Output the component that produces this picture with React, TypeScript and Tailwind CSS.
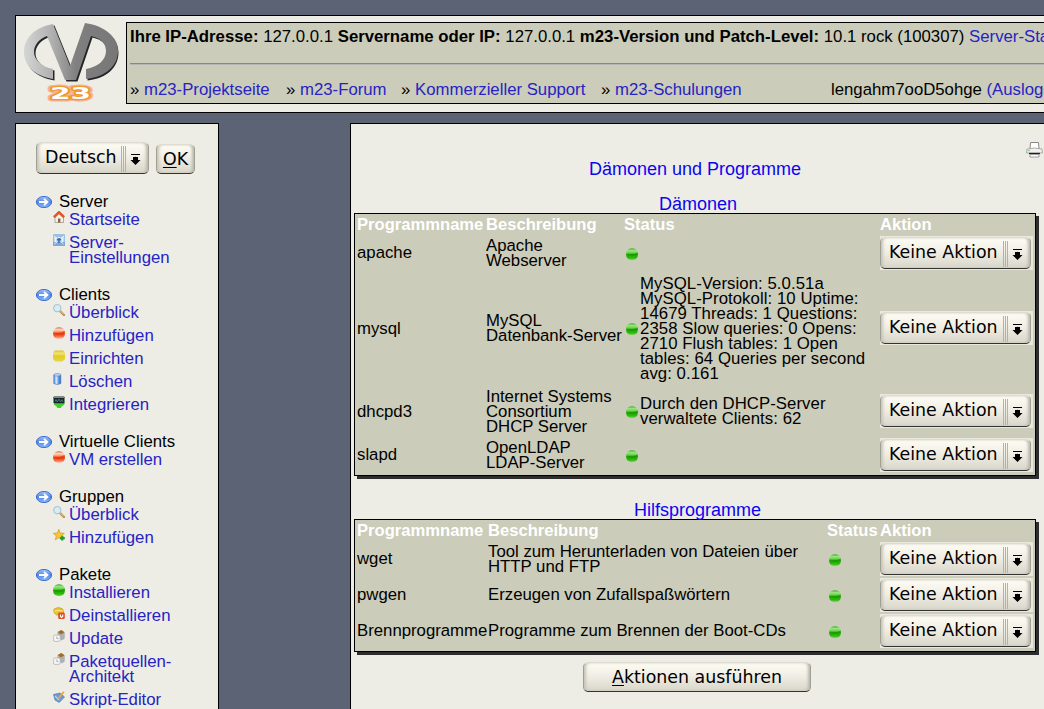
import React from "react";

type Item = { icon: string; lines: string[] };
type Group = { title: string; items: Item[] };

const groups: Group[] = [
  { title: "Server", items: [{ icon: "home", lines: ["Startseite"] }, { icon: "settings", lines: ["Server-", "Einstellungen"] }] },
  {
    title: "Clients",
    items: [
      { icon: "lens", lines: ["Überblick"] },
      { icon: "red", lines: ["Hinzufügen"] },
      { icon: "yellow", lines: ["Einrichten"] },
      { icon: "can", lines: ["Löschen"] },
      { icon: "integrate", lines: ["Integrieren"] },
    ],
  },
  { title: "Virtuelle Clients", items: [{ icon: "red", lines: ["VM erstellen"] }] },
  { title: "Gruppen", items: [{ icon: "lens", lines: ["Überblick"] }, { icon: "star", lines: ["Hinzufügen"] }] },
  {
    title: "Pakete",
    items: [
      { icon: "green", lines: ["Installieren"] },
      { icon: "remove", lines: ["Deinstallieren"] },
      { icon: "update", lines: ["Update"] },
      { icon: "update", lines: ["Paketquellen-", "Architekt"] },
      { icon: "script", lines: ["Skript-Editor"] },
    ],
  },
];

function Gradients() {
  return (
    <svg width="0" height="0" className="absolute">
      <defs>
        <linearGradient id="gGreen" x1="0" y1="0" x2="0" y2="1">
          <stop offset="0" stopColor="#3fae2a" /><stop offset=".2" stopColor="#9be680" /><stop offset=".42" stopColor="#5fd040" />
          <stop offset=".5" stopColor="#22a008" /><stop offset=".8" stopColor="#2cb80c" /><stop offset="1" stopColor="#69d84a" />
        </linearGradient>
        <linearGradient id="gRed" x1="0" y1="0" x2="0" y2="1">
          <stop offset="0" stopColor="#d8703f" /><stop offset=".2" stopColor="#fbd8c8" /><stop offset=".42" stopColor="#f08a60" />
          <stop offset=".5" stopColor="#e83c0c" /><stop offset=".75" stopColor="#f4623a" /><stop offset="1" stopColor="#f8d0c0" />
        </linearGradient>
        <linearGradient id="gYellow" x1="0" y1="0" x2="0" y2="1">
          <stop offset="0" stopColor="#d8c020" /><stop offset=".25" stopColor="#f0e47c" /><stop offset=".5" stopColor="#e2cc28" /><stop offset="1" stopColor="#e6d644" />
        </linearGradient>
        <linearGradient id="gBlue" x1="0" y1="0" x2="0" y2="1">
          <stop offset="0" stopColor="#a9c8fb" /><stop offset=".5" stopColor="#4c86ec" /><stop offset="1" stopColor="#8cc0ff" />
        </linearGradient>
        <linearGradient id="gCan" x1="0" y1="0" x2="1" y2="0">
          <stop offset="0" stopColor="#3f80d8" /><stop offset=".35" stopColor="#dcecff" /><stop offset=".7" stopColor="#5b98ea" /><stop offset="1" stopColor="#2c62b8" />
        </linearGradient>
        <linearGradient id="gMetal" x1="0" y1="0" x2="1" y2="0">
          <stop offset="0" stopColor="#d4d5d5" /><stop offset=".3" stopColor="#b0b0b0" /><stop offset=".55" stopColor="#808080" /><stop offset="1" stopColor="#777777" />
        </linearGradient>
      </defs>
    </svg>
  );
}

const ball = "M2 1.4Q6 -.8 10 1.4Q12 3 12 6Q12 9.500 10 11Q6 13 2 11Q0 9.500 0 6Q0 3 2 1.4Z";

function Icon({ name }: { name: string }) {
  return (
    <svg width="12" height="12" viewBox="0 0 12 12" className="block shrink-0">
      {name === "green" && (
        <>
          <path d={ball} fill="url(#gGreen)" /><path d="M.3 6.500Q6 7.500 11.700 4.500V6.500Q9 8 6 8Q3 8 .3 6.500Z" fill="#1c9606" opacity=".7" />
        </>
      )}
      {name === "red" && (
        <>
          <path d={ball} fill="url(#gRed)" /><path d="M.3 6.500Q6 7 11.700 4V6.500Q9 8 6 8Q3 8 .3 6.500Z" fill="#ea3a0a" opacity=".8" />
        </>
      )}
      {name === "yellow" && <path d="M2 .5H10L12 2.5V9L9.5 11.5H2.5L0 9V2.5Z" fill="url(#gYellow)" />}
      {name === "home" && (
        <>
          <path d="M2 6V11.5H10.5V6L6 2Z" fill="#f5f1ea" stroke="#9a8a78" strokeWidth=".7" />
          <path d="M.8 6.2L6 1.300L11.2 6.2" fill="none" stroke="#e2542a" strokeWidth="2.600" />
          <path d="M5 7.5H7.4V11.5H5Z" fill="#8a6248" />
        </>
      )}
      {name === "settings" && (
        <>
          <rect width="12" height="12" rx="1" fill="#9cbfe4" /><path d="M0 8H12V12H0Z" fill="#7fa8d4" />
          <path d="M2.500 3V8M9.500 3V8" stroke="#e9f3fc" strokeWidth="2" /><path d="M1 2L4 4.500L6 3L8 4.500L11 2M1.500 10L4.500 7.500M10.500 10L7.500 7.500" stroke="#e9f3fc" strokeWidth="1" fill="none" />
          <path d="M4 5.500H8M6 4V9" stroke="#3b6da9" strokeWidth="1.500" />
        </>
      )}
      {name === "lens" && (
        <>
          <path d="M7 7L11 11" stroke="#b58c4b" strokeWidth="2.4" strokeLinecap="round" /><path d="M7.6 7.2L11 10.6" stroke="#ead39b" strokeWidth="1" />
          <circle cx="4.3" cy="4.2" r="3.7" fill="#d5edf5" stroke="#a4bdc8" strokeWidth="1" />
        </>
      )}
      {name === "can" && (
        <>
          <path d="M.8 1.8V10.5Q4 12.7 7.8 10.5V1.8Z" fill="url(#gCan)" stroke="#4672ae" strokeWidth=".6" />
          <ellipse cx="4.3" cy="1.8" rx="3.5" ry="1.3" fill="#b9d6f8" stroke="#4672ae" strokeWidth=".5" />
        </>
      )}
      {name === "integrate" && (
        <>
          <path d="M1 6H11.500V8.500L8.500 10.500L8 12H4.500L3.500 10.500L.8 8.500Z" fill="#3fd02c" /><rect x=".5" y=".5" width="11" height="6.8" rx=".7" fill="#14242a" />
          <path d="M1 1.5H11" stroke="#569dab" strokeWidth="1" /><path d="M2 5.5L3 3.5L4.3 6L6 3L7.5 6L9 3.5L10 6" fill="none" stroke="#5f9296" strokeWidth=".7" />
        </>
      )}
      {name === "star" && (
        <>
          <path d="M5.8 .3L7.2 4L11.3 4.3L8.3 6.9L9.3 11L5.8 8.8L2.2 11L3.3 6.9L.2 4.3L4.3 4Z" fill="#f6c72e" stroke="#c99417" strokeWidth=".6" />
          <path d="M9.3 6.8V11.6M7 9.2H11.8" stroke="#299a30" strokeWidth="2.2" />
        </>
      )}
      {name === "remove" && (
        <>
          <path d="M1 2Q5 -1 9.5 1.8Q11.500 4.8 10 8H3.500Q-.5 6 1 2Z" fill="#eac42e" stroke="#bb9320" strokeWidth=".6" /><path d="M1.5 4Q5 3 9.7 4" fill="none" stroke="#fbe88e" />
          <rect x="5.2" y="5.500" width="6.6" height="6.500" rx="1.200" fill="#e04c28" /><path d="M7.500 7.500V9.500L8.500 10.500L9.700 9.500V7.500" fill="none" stroke="#fff" strokeWidth="1.1" />
        </>
      )}
      {name === "update" && (
        <>
          <path d="M4.5 2L8 .3L11.5 2V7.5L8 9.5L4.5 8Z" fill="#b9ac9a" /><path d="M4.800 2L8.3 0L11.500 2.3L8 4.500Z" fill="#a46a28" />
          <path d="M8 4.500L11.500 3V9L8 10.5Z" fill="#a3b2c4" /><rect x=".4" y="5" width="6.8" height="6.4" rx="1.5" fill="#f4f4f2" stroke="#aaaab0" strokeWidth=".7" />
          <path d="M3.8 6.5V8.5H5.4" fill="none" stroke="#999" strokeWidth=".7" />
        </>
      )}
      {name === "script" && (
        <>
          <path d="M.5 3.5L7 2L11.5 6L6.2 11.5L2 9Z" fill="#6f9ad5" stroke="#426ba8" strokeWidth=".6" /><path d="M2 5L6 9" stroke="#b4d0f2" strokeWidth="1.3" />
          <path d="M5.4 7.5L10.8 .8" stroke="#e8a738" strokeWidth="1.8" />
        </>
      )}
    </svg>
  );
}

function Bullet() {
  return (
    <svg width="16" height="12" viewBox="0 0 16 12" className="mt-[2px] mr-[7px] block shrink-0">
      <ellipse cx="8" cy="6" rx="7.6" ry="5.6" fill="url(#gBlue)" stroke="#3462c4" strokeWidth=".9" />
      <path d="M3 6H11M8 3L11.5 6L8 9" fill="none" stroke="#fff" strokeWidth="1.8" />
    </svg>
  );
}

const buttonFace =
  "rounded-[5px] border border-[#a09f94] border-t-[#dedcd1] border-b-[1.5px] border-b-[#333333] bg-linear-to-b from-[#fdfcf4] via-[#efede3] to-[#d8d6c9] font-['DejaVu_Sans'] shadow-[inset_3px_0_3px_-1px_#c6c4b8,inset_-3px_0_3px_-1px_#bab8ac]";

function Select({ label }: { label: string }) {
  return (
    <div className={`flex h-8 w-full items-start ${buttonFace}`}>
      <span className="flex-1 pl-2 text-[17.4px] leading-[29px] whitespace-nowrap">{label}</span>
      <span className="mt-[3px] h-[26px] w-[5px] shrink-0 border-x border-[#b4b2a6]"><span className="mx-auto block h-full w-px bg-[#b4b2a6]" /></span>
      <svg width="22" height="30" viewBox="0 0 22 30" className="block shrink-0">
        <path d="M5 11.5H14M9.5 13.8V19" stroke="#000" strokeWidth="1" /><path d="M7 14H12V17H14.5L9.5 22L4.5 17H7Z" />
      </svg>
    </div>
  );
}

function ActionBox() {
  return (
    <div className="h-[34px] w-[153px] bg-[#eae7dc] pt-px pr-[2px]">
      <Select label="Keine Aktion" />
    </div>
  );
}

function Logo() {
  return (
    <svg width="106" height="88" viewBox="20 22 106 88" className="block shrink-0">
      <path
        fill="#262626"
        transform="translate(1.5 1.5)"
        d="M53 24L70 66L84 23C106 26 117 38 117 51C117 66 105 77 86 79V69C98 67 106 60 106 51C106 43 100 38 91 36L76 80H65L47 36C39 39 34 45 34 52C34 60 42 67 53 69V79C34 76 24 65 24 52C24 38 35 27 53 24Z"
      />
      <path
        fill="url(#gMetal)"
        d="M53 24L70 66L85 23C106 26 118 38 118 51C118 66 105 77 86 79V69C98 67 106 60 106 51C106 43 100 38 91 36L76 80H65L47 36C39 39 34 45 34 52C34 60 42 67 53 69V79C34 76 24 65 24 52C24 38 35 27 53 24Z"
      />
      <text x="50" y="99" textLength="41" lengthAdjust="spacingAndGlyphs" fontFamily="DejaVu Sans" fontWeight="bold" fontSize="16" fill="#f6b498" stroke="#f6b498" strokeWidth="5" strokeLinejoin="round">23</text>
      <text x="50" y="99" textLength="41" lengthAdjust="spacingAndGlyphs" fontFamily="DejaVu Sans" fontWeight="bold" fontSize="16" fill="#fff" stroke="#f0982c" strokeWidth="2.6" strokeLinejoin="round" paintOrder="stroke">23</text>
    </svg>
  );
}

type Row = { name: string; desc: string[]; status?: string[]; height: string; nameClass?: string; descClass?: string; statusClass?: string };

const daemons: Row[] = [
  { name: "apache", desc: ["Apache", "Webserver"], height: "h-[35px]" },
  {
    name: "mysql",
    desc: ["MySQL", "Datenbank-Server"],
    status: ["MySQL-Version: 5.0.51a", "MySQL-Protokoll: 10 Uptime:", "14679 Threads: 1 Questions:", "2358 Slow queries: 0 Opens:", "2710 Flush tables: 1 Open", "tables: 64 Queries per second", "avg: 0.161"],
    height: "h-[115px]",
    nameClass: "pt-[2px]",
    statusClass: "pt-[2px]",
  },
  { name: "dhcpd3", desc: ["Internet Systems", "Consortium", "DHCP Server"], status: ["Durch den DHCP-Server", "verwaltete Clients: 62"], height: "h-[51px]", nameClass: "pt-[2px]", descClass: "pt-[2px]" },
  { name: "slapd", desc: ["OpenLDAP", "LDAP-Server"], height: "h-[37px]" },
];

const tools: Row[] = [
  { name: "wget", desc: ["Tool zum Herunterladen von Dateien über", "HTTP und FTP"], height: "h-9", nameClass: "pb-[2px]" },
  { name: "pwgen", desc: ["Erzeugen von Zufallspaßwörtern"], height: "h-9", nameClass: "pb-[2px]", descClass: "pb-[2px]" },
  { name: "Brennprogramme", desc: ["Programme zum Brennen der Boot-CDs"], height: "h-9", nameClass: "pb-[2px]", descClass: "pb-[2px]" },
];

function Lines({ lines, className = "" }: { lines: string[]; className?: string }) {
  return <div className={className}>{lines.map((l) => <div key={l}>{l}</div>)}</div>;
}

function ProgramTable({ rows, columns, className }: { rows: Row[]; columns: string; className: string }) {
  return (
    <div className={`w-[682px] border border-black bg-[#cbccb9] pl-[2px] leading-[15px] whitespace-nowrap shadow-[3px_3px_0_#2d2d2d] ${className}`}>
      <div className={`grid h-[21px] items-center text-[16.6px] font-bold text-white ${columns}`}>
        <span>Programmname</span><span>Beschreibung</span><span>Status</span><span>Aktion</span>
      </div>
      {rows.map((r) => (
        <div key={r.name} className={`grid items-center ${columns} ${r.height}`}>
          <span className={r.nameClass}>{r.name}</span>
          <Lines lines={r.desc} className={r.descClass} />
          <div className="flex items-center gap-[2px] pl-[2px]">
            <div className="pt-[2px]"><Icon name="green" /></div>
            {r.status && <Lines lines={r.status} className={`tracking-[0.06px] ${r.statusClass ?? ""}`} />}
          </div>
          <ActionBox />
        </div>
      ))}
    </div>
  );
}

const link = "text-[#2723c4]";

export default function App() {
  return (
    <div className="h-[709px] w-[1044px] overflow-hidden bg-[#5b6375] pt-[15px] pl-[15px] font-['Liberation_Sans',sans-serif] text-[16.75px] leading-[15px] text-black">
      <Gradients />
      <header className="flex h-[98px] w-[1060px] border border-black bg-[#eeede5] pt-[6px] pl-1">
        <Logo />
        <div className="h-[82px] w-[1020px] shrink-0 border border-black bg-[#cbccb9] pl-[3px] whitespace-nowrap">
          <div className="flex h-10 gap-[4.7px] pt-[6px]">
            <b>Ihre IP-Adresse:</b><span>127.0.0.1</span><b>Servername oder IP:</b><span>127.0.0.1</span>
            <b>m23-Version und Patch-Level:</b><span>10.1 rock (100307)</span><span className={link}>Server-Status</span>
          </div>
          <div className="h-[2px] border-t border-[#85868f] bg-[#b5b6b3]" />
          <div className="flex h-[38px] pt-[17px]">
            <span className="w-[156px] shrink-0">» <span className={link}>m23-Projektseite</span></span>
            <span className="w-[115px] shrink-0">» <span className={link}>m23-Forum</span></span>
            <span className="w-[200px] shrink-0">» <span className={link}>Kommerzieller Support</span></span>
            <span className="w-[230px] shrink-0">» <span className={link}>m23-Schulungen</span></span>
            <span className="shrink-0">lengahm7ooD5ohge <span className={link}>(Ausloggen)</span></span>
          </div>
        </div>
      </header>

      <div className="mt-[10px] flex">
        <nav className="h-[600px] w-[204px] shrink-0 border border-black bg-[#eeede5] pt-[18px] pl-5">
          <div className="flex h-8 items-end gap-[7px]">
            <div className="w-[113px]"><Select label="Deutsch" /></div>
            <button className={`h-[30px] w-[39px] text-[17.4px] leading-[26px] ${buttonFace}`}><u className="underline-offset-2">O</u>K</button>
          </div>
          <div className="mt-5">
            {groups.map((g) => (
              <section key={g.title} className="mb-[14px]">
                <div className="flex h-[18px] items-start"><Bullet /><span>{g.title}</span></div>
                {g.items.map((it) => (
                  <div key={it.lines.join()} className={`flex gap-1 pb-2 pl-[17px] ${link}`}>
                    <div className="-mt-px h-3"><Icon name={it.icon} /></div>
                    <Lines lines={it.lines} />
                  </div>
                ))}
              </section>
            ))}
          </div>
        </nav>

        <main className="ml-[131px] h-[600px] w-[720px] shrink-0 border border-black bg-[#eeede5] pt-[17px] pl-[3px]">
          <div className="flex h-[19px] w-[689px] justify-end">
            <svg width="17" height="17" viewBox="0 0 17 17">
              <path d="M4.5 1.5H12.5L13 8H4Z" fill="#fff" stroke="#888" /><path d="M1 8Q8.500 6 16 8L16.500 12H.5Z" fill="#f0f0ed" stroke="#999" strokeWidth=".8" />
              <path d="M3 12.500H14" stroke="#222" strokeWidth="1.300" /><path d="M4 13.500H13V16H4Z" fill="#fff" stroke="#888" strokeWidth=".8" />
              <circle cx="3" cy="9.500" r=".8" fill="#55c855" />
            </svg>
          </div>
          <h1 className="w-[682px] text-center text-[18px] leading-[18px] text-[#0b05f0]">Dämonen und Programme</h1>
          <h2 className="mt-[17px] h-[18px] w-[688px] text-center text-[18px] leading-[18px] text-[#0b05f0]">Dämonen</h2>
          <ProgramTable rows={daemons} columns="grid-cols-[129px_138px_256px_153px]" className="h-[263px]" />
          <h2 className="mt-[25px] h-[18px] w-[687px] text-center text-[18px] leading-[18px] text-[#0b05f0]">Hilfsprogramme</h2>
          <ProgramTable rows={tools} columns="grid-cols-[131px_339px_53px_153px]" className="h-[133px]" />
          <button className={`mt-[10px] ml-[229px] h-[30px] w-[228px] text-[17.4px] leading-[25px] ${buttonFace}`}><u className="underline-offset-2">A</u>ktionen ausführen</button>
        </main>
      </div>
    </div>
  );
}
